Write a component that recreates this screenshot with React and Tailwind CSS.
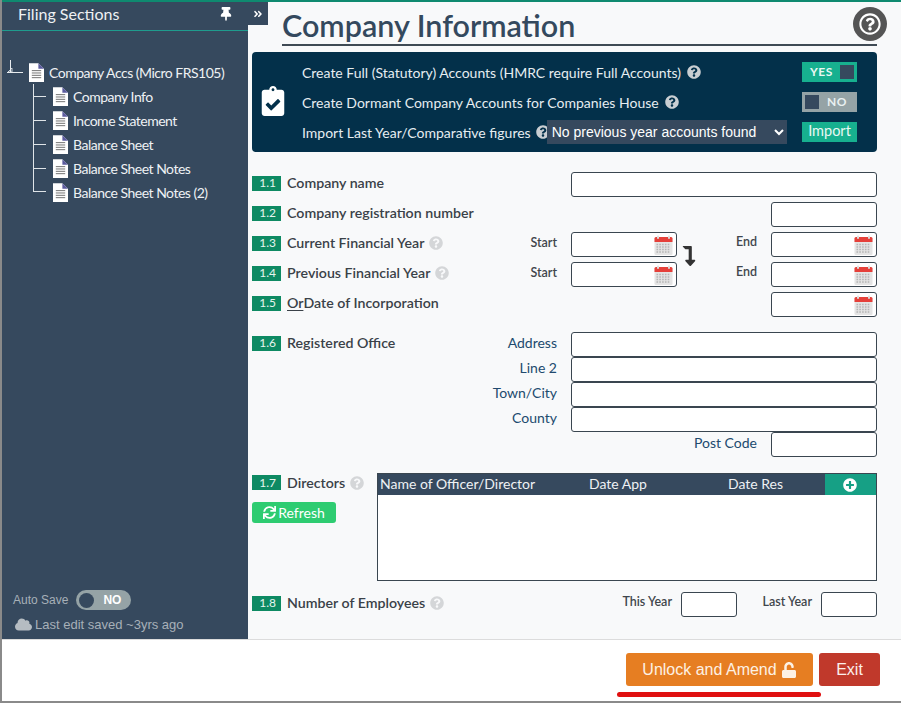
import { FaThumbtack, FaAngleDoubleRight, FaRegQuestionCircle, FaQuestionCircle, FaClipboardCheck, FaLevelDownAlt, FaSync, FaPlusCircle, FaCloud, FaUnlock } from 'react-icons/fa';

const sections = ['Company Info', 'Income Statement', 'Balance Sheet', 'Balance Sheet Notes', 'Balance Sheet Notes (2)'];

function FileIcon() {
  return (
    <svg width="15" height="19" viewBox="0 0 16 20" className="shrink-0">
      <path d="M0 0H10L16 6V20H0Z" fill="#fff" />
      <path d="M10 0L16 6H10Z" fill="#5b5b9e" />
      <path d="M3 8H13M3 10.5H13M3 13H13M3 15.5H13" stroke="#6b6b6b" strokeWidth="1" />
    </svg>
  );
}

function CalendarIcon() {
  return (
    <svg width="19" height="20" viewBox="0 0 19 20" className="shrink-0">
      <rect x="0.5" y="2" width="18" height="18" rx="1.5" fill="#e4e4e4" />
      <path d="M0.5 3.5Q0.5 2 2 2H17Q18.5 2 18.5 3.5V7H0.5Z" fill="#e5403a" />
      <rect x="3" y="0.5" width="2" height="3.5" rx="1" fill="#ddd" />
      <rect x="14" y="0.5" width="2" height="3.5" rx="1" fill="#ddd" />
      <path d="M2.5 9.5H16.5M2.5 12H16.5M2.5 14.5H16.5M2.5 17H16.5" stroke="#b5b5b5" strokeWidth="1.3" strokeDasharray="1.6 1.2" />
    </svg>
  );
}

function Badge({ n }) {
  return <span className="flex h-[15px] w-[29px] shrink-0 items-center justify-end bg-[#0e8a63] pr-[5px] text-[12px] text-[#e8f5ef]">{n}</span>;
}

function Hint() {
  return <FaQuestionCircle className="ml-[5px] shrink-0 text-[14px] text-[#d4d6d8]" />;
}

function Input({ width = 'w-[106px]', date }) {
  return (
    <div className={`flex h-[25px] ${width} shrink-0 items-center justify-end rounded-[3px] border border-[#3a4650] bg-white pr-[3px]`}>
      {date && <CalendarIcon />}
    </div>
  );
}

function Row({ n, label, hint, start, children, cls = 'h-[30px]' }) {
  return (
    <div className={`flex ${cls}`}>
      <div className="flex h-[22px] w-[319px] items-center">
        <Badge n={n} />
        <span className="ml-[6px] text-[14.2px] font-semibold text-[#3a4148]">{label}</span>
        {hint && <Hint />}
        {start && <span className="ml-auto pr-[14px] text-[12.5px] font-semibold text-[#3f464c]">Start</span>}
      </div>
      {children}
    </div>
  );
}

function SmallLabel({ children, width, pr = 'pr-[14px]' }) {
  return <span className={`${width} ${pr} flex h-[20px] shrink-0 items-center justify-end text-[12.5px] font-semibold text-[#3f464c]`}>{children}</span>;
}

function AddressRow({ label, left = true }) {
  return (
    <div className="flex h-[25px] items-center justify-end text-[14px] text-[#214a6e]">
      <span className="pb-[5px] pr-[14px]">{label}</span>
      <Input width={left ? 'w-[306px]' : 'w-[106px]'} />
    </div>
  );
}

function Sidebar() {
  return (
    <aside className="flex w-[246px] shrink-0 flex-col bg-[#36495e] text-[#eef1f4]">
      <div className="flex h-[29px] items-center justify-between border-b border-[#1f9c8e] pb-[4px] pl-[16px] pr-[15px]">
        <span className="text-[16px] leading-none">Filing Sections</span>
        <FaThumbtack className="text-[14px] text-white" />
      </div>
      <div className="relative mt-[29px] flex-1 text-[14px] tracking-[-0.5px]">
        <div className="flex h-[24px] items-center pl-[27px]">
          <FileIcon />
          <span className="ml-[5px]">Company Accs (Micro FRS105)</span>
          <svg width="18" height="14" viewBox="0 0 18 14" className="absolute left-[3px] top-[0px]">
            <path d="M5.5 0V12M2 12.5H18" stroke="#e8ecef" strokeWidth="1" fill="none" />
            <path d="M3 12L7 8V12Z" fill="none" stroke="#e8ecef" strokeWidth="0.8" />
          </svg>
        </div>
        {sections.map((s, i) => (
          <div key={s} className="relative flex h-[24px] items-center pl-[51px]">
            <span className={`absolute left-[31px] top-0 w-[13px] border-l border-[#dfe4e8] ${i === sections.length - 1 ? 'h-[12px] border-b' : 'h-[24px]'}`} />
            {i !== sections.length - 1 && <span className="absolute left-[31px] top-[12px] w-[13px] border-t border-[#dfe4e8]" />}
            <FileIcon />
            <span className="ml-[5px]">{s}</span>
          </div>
        ))}
      </div>
      <div className="pb-[5px] pl-[11px] font-['Liberation_Sans',sans-serif] text-[12px] text-[#a7b0b8]">
        <div className="flex items-center">
          <span>Auto Save</span>
          <div className="ml-[8px] flex h-[20px] w-[55px] items-center rounded-full bg-[#95a3a6] pl-[3px]">
            <span className="size-[15px] rounded-full bg-[#36495e]" />
            <span className="ml-[9px] text-[12px] font-bold text-white">NO</span>
          </div>
        </div>
        <div className="mt-[5px] flex h-[19px] items-center pl-[2px] text-[13px]">
          <FaCloud className="text-[17px] text-[#b5bcc2]" />
          <span className="ml-[3px]">Last edit saved ~3yrs ago</span>
        </div>
      </div>
    </aside>
  );
}

function OptionsPanel() {
  return (
    <div className="flex h-[100px] w-[625px] items-center rounded-[4px] bg-[#03304a] pl-[6px] text-[14px] text-[#e6edf1]">
      <FaClipboardCheck className="mb-[2px] mr-[14px] shrink-0 text-[30px] text-white" />
      <div className="flex-1">
        <div className="flex h-[30px] items-center">
          <span>Create Full (Statutory) Accounts (HMRC require Full Accounts)</span>
          <FaQuestionCircle className="ml-[6px] text-[14px] text-[#c9ced2]" />
        </div>
        <div className="flex h-[30px] items-center">
          <span>Create Dormant Company Accounts for Companies House</span>
          <FaQuestionCircle className="ml-[6px] text-[14px] text-[#c9ced2]" />
        </div>
        <div className="flex h-[30px] items-center">
          <span>Import Last Year/Comparative figures</span>
          <FaQuestionCircle className="ml-[5px] shrink-0 text-[14px] text-[#c9ced2]" />
          <select className="-ml-[3px] h-[24px] w-[240px] rounded-none bg-[#36495e] pl-[1px] font-['Liberation_Sans',sans-serif] text-[14px] text-white">
            <option>No previous year accounts found</option>
          </select>
        </div>
      </div>
      <div className="mr-[20px] flex w-[55px] shrink-0 flex-col">
        <div className="flex h-[30px] items-center">
          <div className="flex h-[20px] w-[55px] items-center justify-between bg-[#17b08f] pl-[8px] pr-[3px] text-[12px] font-bold tracking-[0.5px] text-[#e9f7f3]">
            YES
            <span className="size-[14px] bg-[#36495e]" />
          </div>
        </div>
        <div className="flex h-[30px] items-center">
          <div className="flex h-[20px] w-[55px] items-center justify-between bg-[#95a3a6] pl-[3px] pr-[10px] text-[12px] font-bold tracking-[0.5px] text-[#e9f0f1]">
            <span className="size-[14px] bg-[#36495e]" />
            NO
          </div>
        </div>
        <div className="flex h-[30px] items-center">
          <button className="h-[20px] w-[55px] bg-[#17b08f] pb-[2px] text-[14.5px] leading-none text-[#e9f7f3]">Import</button>
        </div>
      </div>
    </div>
  );
}

function CompanyForm() {
  return (
    <div className="mt-[20px] w-[625px]">
      <Row n="1.1" label="Company name">
        <Input width="w-[306px]" />
      </Row>
      <Row n="1.2" label="Company registration number">
        <div className="ml-[200px]"><Input /></div>
      </Row>
      <Row n="1.3" label="Current Financial Year" hint start>
        <Input date />
        <SmallLabel width="w-[94px]">End</SmallLabel>
        <Input date />
      </Row>
      <Row n="1.4" label="Previous Financial Year" hint start>
        <Input date />
        <SmallLabel width="w-[94px]">End</SmallLabel>
        <Input date />
      </Row>
      <Row n="1.5" label={<><span className="underline underline-offset-2">Or</span>Date of Incorporation</>} cls="h-[40px]">
        <div className="ml-[200px]"><Input date /></div>
      </Row>
      <div className="flex h-[141px]">
        <div className="flex h-[22px] w-[200px] items-center">
          <Badge n="1.6" />
          <span className="ml-[6px] text-[14.2px] font-semibold text-[#3a4148]">Registered Office</span>
        </div>
        <div className="flex-1">
          <AddressRow label="Address" />
          <AddressRow label="Line 2" />
          <AddressRow label="Town/City" />
          <AddressRow label="County" />
          <AddressRow label="Post Code" left={false} />
        </div>
      </div>
      <div className="flex h-[119px]">
        <div className="w-[125px] shrink-0">
          <div className="flex h-[19px] items-center">
            <Badge n="1.7" />
            <span className="ml-[6px] text-[14.2px] font-semibold text-[#3a4148]">Directors</span>
            <Hint />
          </div>
          <button className="mt-[10px] flex h-[21px] w-[84px] items-center justify-center rounded-[3px] bg-[#2ecc71] text-[14px] text-white">
            <FaSync className="mr-[2px] text-[13px]" />Refresh
          </button>
        </div>
        <div className="h-[108px] w-[500px] border border-[#3a4650] bg-white">
          <div className="flex h-[21px] items-center bg-[#36495e] text-[14px] text-[#eef1f4]">
            <span className="w-[211px] pb-[2px] pl-[2px]">Name of Officer/Director</span>
            <span className="w-[139px] pb-[2px]">Date App</span>
            <span className="w-[97px] pb-[2px]">Date Res</span>
            <span className="flex h-full flex-1 items-center justify-center bg-[#16a085] pr-[2px]"><FaPlusCircle className="text-[14px] text-white" /></span>
          </div>
        </div>
      </div>
      <Row n="1.8" label="Number of Employees" hint>
        <SmallLabel width="w-[110px]" pr="pr-[9px]">This Year</SmallLabel>
        <Input width="w-[56px]" />
        <SmallLabel width="w-[84px]" pr="pr-[9px]">Last Year</SmallLabel>
        <Input width="w-[56px]" />
      </Row>
    </div>
  );
}

export default function App() {
  return (
    <div className="relative flex h-[703px] w-[901px] flex-col overflow-hidden border-b-2 border-l-2 border-[#8a8a8a] bg-white font-['Lato',sans-serif]">
      <div className="h-[2px] shrink-0 bg-[#0f8a70]" />
      <div className="flex h-[638px] shrink-0 border-b border-[#dcdcdc]">
        <Sidebar />
        <main className="relative flex-1 bg-[#f8f9fa] pl-[4px]">
          <button className="absolute left-0 top-0 flex h-[23px] w-[20px] items-center justify-center bg-[#36495e] text-[10px] text-white">
            <FaAngleDoubleRight />
          </button>
          <div className="ml-[30px] h-[44px] w-[595px] border-b-2 border-[#3f4a54] pt-[5px] text-[30.5px] font-semibold leading-[36px] text-[#34495e]">
            Company Information
          </div>
          <span className="absolute left-[605px] top-[5px] flex size-[34px] items-center justify-center rounded-full bg-[#555]">
            <FaRegQuestionCircle className="text-[22px] text-white" />
          </span>
          <div className="mt-[6px]"><OptionsPanel /></div>
          <CompanyForm />
          <FaLevelDownAlt className="absolute left-[431px] top-[244px] text-[20px] text-[#333]" />
        </main>
      </div>
      <footer className="flex flex-1 items-start justify-end bg-white pr-[21px] pt-[13px] font-['Liberation_Sans',sans-serif] text-[16px]">
        <button className="flex h-[33px] w-[187px] items-center justify-center rounded-[3px] bg-[#e67e22] text-[#fdf1e4]">
          Unlock and Amend<FaUnlock className="ml-[4px] text-[16px]" />
        </button>
        <button className="ml-[6px] h-[33px] w-[61px] rounded-[3px] bg-[#c0392b] text-[#fbeeec]">Exit</button>
      </footer>
      <span className="absolute bottom-[4px] left-[615px] h-[5px] w-[204px] rounded-full bg-[#e01010]" />
    </div>
  );
}
